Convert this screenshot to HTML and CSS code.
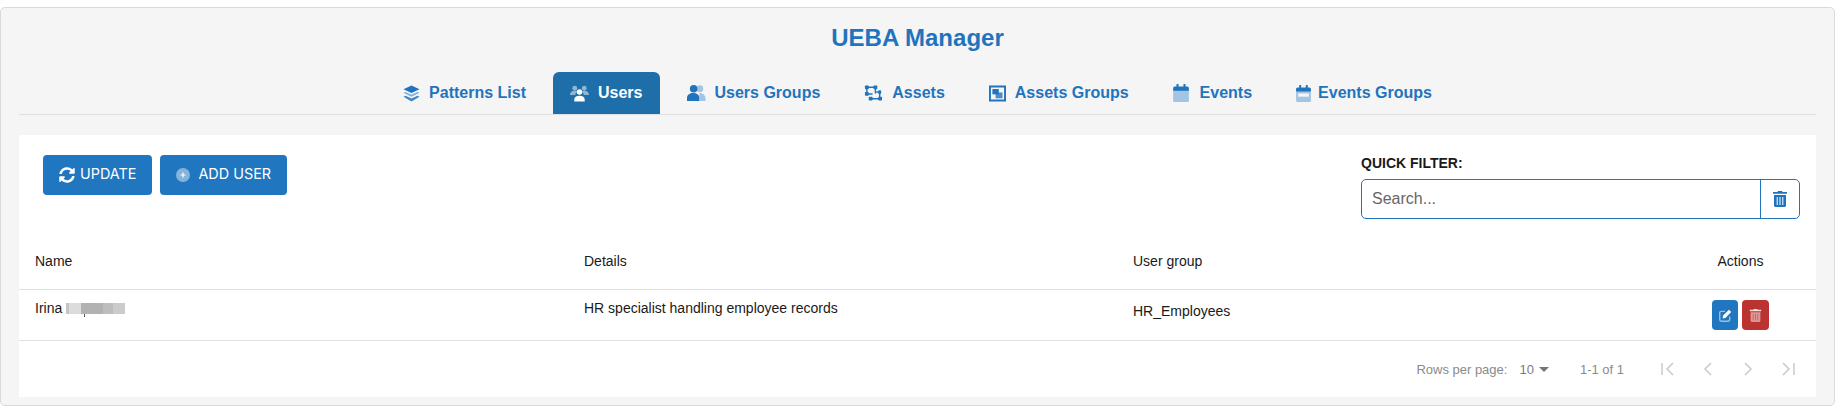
FILE: index.html
```html
<!DOCTYPE html>
<html lang="en">
<head>
<meta charset="utf-8">
<title>UEBA Manager</title>
<link rel="stylesheet" href="styles.css">
</head>
<body>
<main class="card">
  <h1 class="title">UEBA Manager</h1>
  <nav class="tabs">
    <a class="tab"><svg class="ic" viewBox="0 0 18 18"><path class="d" d="M9 .5l8.500 4-8.500 4-8.500-4z"/><path class="d" d="M2.700 7.300L9 10.200l6.300-2.900 2.200 1L9 12.400.5 8.300z" opacity=".55"/><path class="d" d="M2.700 11.400L9 14.300l6.300-2.900 2.200 1L9 17.500.5 12.400z" opacity=".85"/></svg><span>Patterns List</span></a>
    <a class="tab active"><svg class="ic ic-w" viewBox="0 0 20 18"><g fill="#fff" opacity=".5"><circle cx="5" cy="4" r="2.600"/><circle cx="15" cy="4" r="2.600"/><path d="M0 11c0-3 2-4.300 5-4.300 1 0 2 .2 2.700.6-1.300 1-2 2.200-2.200 3.700zM20 11c0-3-2-4.300-5-4.300-1 0-2 .2-2.700.6 1.300 1 2 2.200 2.200 3.700z"/></g><circle cx="10" cy="8" r="2.900" fill="#fff"/><path fill="#fff" d="M4.500 18v-2c0-2.600 2-4 5.500-4s5.500 1.400 5.500 4v2z"/></svg><span>Users</span></a>
    <a class="tab"><svg class="ic ic-w" viewBox="0 0 20 18"><circle class="l" cx="13.500" cy="4.500" r="3.600"/><path class="l" d="M13 9c4 0 6.500 2.500 6.500 6v2.500h-6z"/><circle class="d" cx="7" cy="4.500" r="4"/><path class="d" d="M0 17.500v-3.500c0-3 3-5 6.500-5s6.500 2 6.500 5v3.500z"/></svg><span>Users Groups</span></a>
    <a class="tab"><svg class="ic ic-w" viewBox="0 0 20 18"><g fill="none" stroke="#1f74bd" stroke-width="1.500"><path d="M3 3h9v6.500M3 3v7h6M7 15h11M18 8h-5"/><path d="M16.500 8v7"/></g><g class="d"><rect x="1" y="1" width="4" height="4" rx=".8"/><rect x="10" y="1" width="4" height="4" rx=".8"/><rect x="1" y="8" width="4" height="4" rx=".8"/><rect x="5" y="13" width="4" height="4" rx=".8"/><rect x="15" y="13" width="4" height="4" rx=".8"/><rect x="15" y="6" width="3" height="4" rx=".8"/></g></svg><span>Assets</span></a>
    <a class="tab"><svg class="ic" viewBox="0 0 16 16"><path class="d" d="M0 .5h16v15H0zM1.800 2.300v11.400h12.400V2.300z"/><rect class="d" x="3.200" y="3.800" width="6" height="5"/><rect class="d" x="6.200" y="7" width="6.500" height="5.500" opacity=".8"/></svg><span>Assets Groups</span></a>
    <a class="tab tab-ev"><svg class="ic ic-cal" viewBox="0 0 14 16"><rect class="l" y="5" width="14" height="11" rx="1.200"/><path class="d" d="M0 6V4c0-1 .6-1.700 1.500-1.700H3V0h1.800v2.300h4.400V0H11v2.300h1.500C13.400 2.300 14 3 14 4v2z"/></svg><span>Events</span></a>
    <a class="tab tab-evg"><svg class="ic ic-cal2" viewBox="0 0 14 16"><rect class="l" y="5" width="14" height="11" rx="1.200"/><path class="d" d="M0 6V4c0-1 .6-1.700 1.500-1.700H3V0h1.800v2.300h4.400V0H11v2.300h1.500C13.400 2.300 14 3 14 4v2z"/><rect x="2" y="8" width="10" height="3" fill="#f5f5f5"/></svg><span>Events Groups</span></a>
  </nav>
  <section class="panel">
    <div class="toolbar">
      <div class="buttons">
        <button class="btn btn-update"><svg class="btn-ic" viewBox="0 0 512 512"><path fill="#fff" d="M370.700 133.300C339.500 104 298.900 88 255.800 88c-77.500.1-144.300 53.200-162.800 126.900-1.300 5.400-6.100 9.100-11.700 9.100H24.100c-7.500 0-13.200-6.800-11.800-14.200C33.900 94.900 134.800 8 256 8c66.400 0 126.800 26.100 171.300 68.700L463 41c15.100-15.100 41-4.400 41 17v134c0 13.300-10.700 24-24 24H346c-21.400 0-32.100-25.900-17-41zM32 296h134c21.400 0 32.100 25.900 17 41l-41.700 41.700c31.200 29.300 71.800 45.300 114.900 45.300 77.400-.1 144.300-53.100 162.800-126.800 1.300-5.400 6.100-9.100 11.700-9.100h57.300c7.500 0 13.200 6.800 11.800 14.200C478.100 417.100 377.200 504 256 504c-66.400 0-126.800-26.100-171.300-68.700L49 471c-15.100 15.100-41 4.400-41-17V320c0-13.300 10.700-24 24-24z"/></svg><span>UPDATE</span></button>
        <button class="btn btn-add"><svg class="btn-add-ic" viewBox="0 0 14 14"><circle cx="7" cy="7" r="7" fill="#fff" opacity=".45"/><path d="M7 4.500v5M4.500 7h5" stroke="#fff" stroke-width="1.200"/></svg><span>ADD USER</span></button>
      </div>
      <div class="filter">
        <label class="filter-label" for="q">QUICK FILTER:</label>
        <div class="filter-box">
          <input id="q" class="filter-input" placeholder="Search...">
          <span class="filter-clear"><svg class="trash" viewBox="0 0 14 16"><path class="d" d="M5 0h4l.6 1H14v1.800H0V1h4.400z"/><path class="d" d="M1 4h12v10.500c0 .8-.7 1.500-1.500 1.500h-9C1.700 16 1 15.300 1 14.500z"/><path d="M4.200 6v8M7 6v8M9.800 6v8" stroke="#fff" stroke-width="1"/></svg></span>
        </div>
      </div>
    </div>
    <div class="row head">
      <div>Name</div><div>Details</div><div>User group</div><div class="col-actions">Actions</div>
    </div>
    <div class="row body">
      <div class="name">Irina <span class="blur"></span></div>
      <div class="details">HR specialist handling employee records</div>
      <div class="group">HR_Employees</div>
      <div class="col-actions actions">
        <span class="act act-edit"><svg class="act-ic" viewBox="0 0 14 14"><path fill="#fff" d="M10.700.8l2.500 2.500-6.300 6.300-3 .5.500-3z"/><path fill="none" stroke="#fff" stroke-opacity=".55" stroke-width="1.500" d="M6.500 2.500H2.300C1.500 2.500.8 3.200.8 4v7.700c0 .8.700 1.500 1.500 1.500H10c.8 0 1.500-.7 1.500-1.500V8"/></svg></span>
        <span class="act act-del"><svg class="act-ic" viewBox="0 0 14 16"><path fill="#fff" opacity=".85" d="M5 0h4l.6 1H14v1.800H0V1h4.400z"/><path fill="#fff" opacity=".5" d="M1 4h12v10.500c0 .8-.7 1.500-1.500 1.500h-9C1.700 16 1 15.300 1 14.500z"/><path d="M4.200 6v8M7 6v8M9.800 6v8" stroke="#ba3330" stroke-opacity=".6" stroke-width="1"/></svg></span>
      </div>
    </div>
    <div class="pager">
      <span class="rows">Rows per page:</span>
      <span class="size">10<i class="caret"></i></span>
      <span class="count">1-1 of 1</span>
      <span class="pg-icons">
        <svg class="pg" viewBox="0 0 14 14"><path d="M1 1v12M12 1L6 7l6 6"/></svg>
        <svg class="pg" viewBox="0 0 14 14"><path d="M10 1L4 7l6 6"/></svg>
        <svg class="pg" viewBox="0 0 14 14"><path d="M4 1l6 6-6 6"/></svg>
        <svg class="pg" viewBox="0 0 14 14"><path d="M13 1v12M2 1l6 6-6 6"/></svg>
      </span>
    </div>
  </section>
</main>
</body>
</html>
```
FILE: styles.css
```css
* { box-sizing: border-box; }
html, body { margin: 0; padding: 0; background: #fff; }
body { padding: 7px 6px 2px 0; font-family: "Liberation Sans", Arial, sans-serif; color: #1a1a1a; }
.card {
  height: 399px;
  padding: 0 18px 8px 18px;
  background: #f5f5f5;
  border: 1px solid #d9d9d9;
  border-radius: 5px;
  display: flex;
  flex-direction: column;
}
.title {
  margin: 0;
  padding-top: 15px;
  height: 64px;
  font-size: 24px;
  line-height: 30px;
  font-weight: 700;
  text-align: center;
  color: #1f74bd;
}
.tabs {
  display: flex;
  justify-content: center;
  gap: 10px;
  height: 43px;
  border-bottom: 1px solid #dfdfe6;
}
.tab {
  display: flex;
  align-items: center;
  height: 42px;
  padding: 0 17px;
  gap: 9px;
  font-size: 16px;
  font-weight: 700;
  color: #1f74bd;
  border-radius: 6px 6px 0 0;
}
.tab.active { background: #1e6eaa; color: #fff; }
.ic { width: 17px; height: 17px; flex: none; }
.ic-w { width: 19px; height: 18px; }
.ic-cal { width: 16px; height: 18px; }
.ic-cal2 { width: 15px; height: 17px; }
.tab-ev { gap: 11px; }
.tab-evg { gap: 7px; }
.d { fill: #1f74bd; }
.l { fill: #a3c5e2; }
.panel {
  flex: 1;
  margin-top: 20px;
  background: #fff;
  display: flex;
  flex-direction: column;
}
.toolbar {
  display: flex;
  justify-content: space-between;
  height: 103px;
  padding: 20px 16px 0 24px;
}
.buttons { display: flex; gap: 8px; align-items: flex-start; }
.btn {
  display: flex;
  align-items: center;
  justify-content: center;
  height: 40px;
  padding: 0 16px;
  gap: 4px;
  border: 0;
  border-radius: 4px;
  background: #2076bf;
  color: #fff;
  font-family: "Inter", "Liberation Sans", sans-serif;
  font-size: 14.4px;
  line-height: 18px;
  font-weight: 400;
}
.btn span { position: relative; top: -1px; }
.btn-update { gap: 5px; }
.btn-add { gap: 8px; }
.btn-ic { width: 16px; height: 16px; }
.btn-add-ic { width: 14px; height: 14px; }
.filter { width: 439px; }
.filter-label {
  display: block;
  height: 24px;
  font-size: 14px;
  line-height: 16px;
  font-weight: 700;
  color: #1a1a1a;
}
.filter-box {
  display: flex;
  height: 40px;
  border: 1px solid #1f74bd;
  border-radius: 5px;
  overflow: hidden;
}
.filter-input {
  flex: 1;
  min-width: 0;
  border: 0;
  outline: 0;
  padding: 0 10px;
  font-family: "Liberation Sans", sans-serif;
  font-size: 16px;
  background: transparent;
}
.filter-input::placeholder { color: #666; opacity: 1; }
.filter-clear {
  display: flex;
  align-items: center;
  justify-content: center;
  width: 39px;
  border-left: 1px solid #1f74bd;
}
.trash { width: 14px; height: 16px; }
.row {
  display: grid;
  grid-template-columns: 549px 549px 549px 1fr;
  padding-left: 16px;
  font-size: 14px;
  border-bottom: 1px solid #e0e0e0;
}
.head { height: 52px; align-items: center; padding-bottom: 6px; }
.body { height: 51px; }
.col-actions { text-align: center; padding-right: 17px; }
.name, .details { padding-top: 9px; line-height: 18px; }
.group { padding-top: 12px; line-height: 18px; }
.blur {
  position: relative;
  display: inline-block;
  width: 59px;
  height: 11px;
  vertical-align: -1px;
  background: linear-gradient(90deg, #c4c4c4 0 3px, #dcdcdc 3px 15px, #b2b2b2 15px 37px, #bdbdbd 37px 47px, #cbcbcb 47px);
}
.blur::after {
  content: "";
  position: absolute;
  left: 18px;
  top: 11px;
  width: 1px;
  height: 3px;
  background: #555;
}
.actions { display: flex; justify-content: center; gap: 4px; padding-top: 10px; }
.act {
  display: flex;
  align-items: center;
  justify-content: center;
  height: 30px;
  border-radius: 4px;
}
.act-edit { width: 26px; background: #2076bf; }
.act-del { width: 27px; background: #ba3330; }
.act-ic { width: 13px; height: 13px; }
.pager {
  display: flex;
  justify-content: flex-end;
  align-items: center;
  height: 56px;
  padding-right: 21px;
  font-size: 13px;
  color: #8a8a8a;
}
.rows { margin-right: 12px; }
.size { display: flex; align-items: center; gap: 5px; color: #7b7b7b; }
.caret { width: 0; height: 0; border: 5px solid transparent; border-top-color: #757575; border-bottom: 0; }
.count { margin: 0 37px 0 31px; }
.pg-icons { display: flex; gap: 26px; }
.pg { width: 14px; height: 14px; fill: none; stroke: #c9c9c9; stroke-width: 1.500; }
```
